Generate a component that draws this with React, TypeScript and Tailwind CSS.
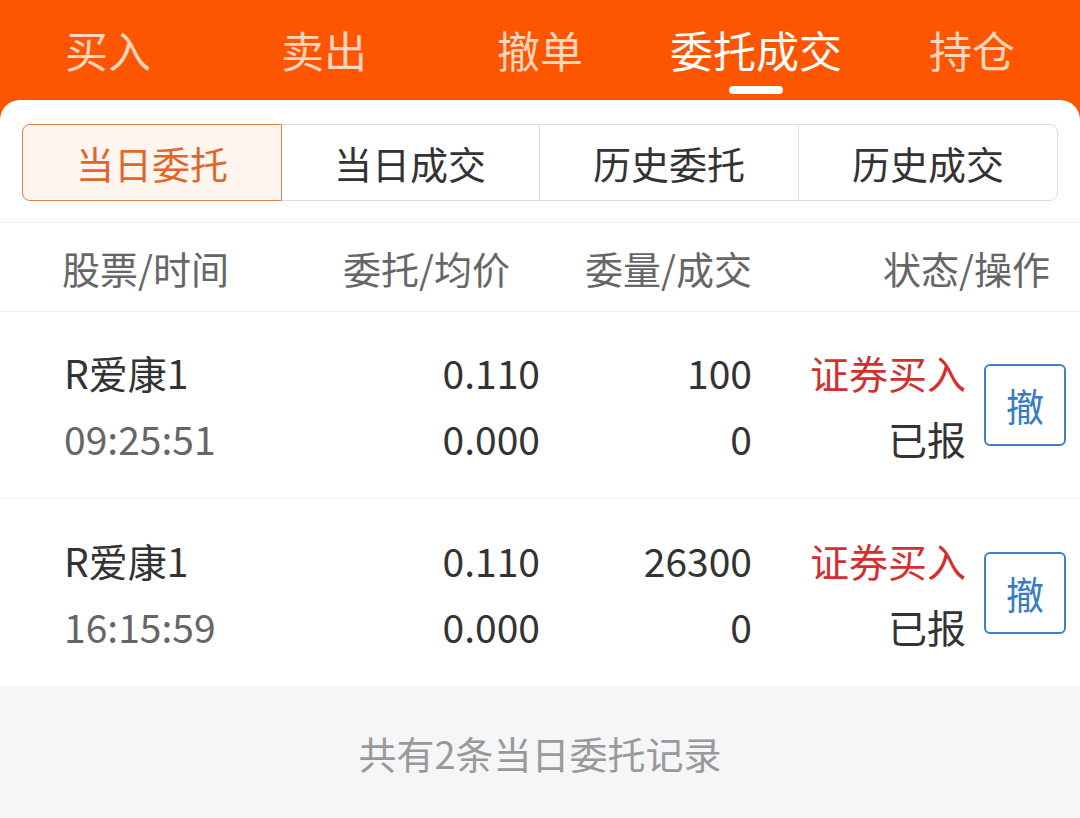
const topTabs = ['买入', '卖出', '撤单', '委托成交', '持仓'];
const segTabs = ['当日委托', '当日成交', '历史委托', '历史成交'];

const orders = [
  { name: 'R爱康1', time: '09:25:51', price: '0.110', avg: '0.000', qty: '100', done: '0', side: '证券买入', status: '已报' },
  { name: 'R爱康1', time: '16:15:59', price: '0.110', avg: '0.000', qty: '26300', done: '0', side: '证券买入', status: '已报' },
];

const font = { fontFamily: '"Noto Sans CJK SC", "Noto Sans", sans-serif' };

export default function App() {
  const active = 3;
  const seg = 0;

  return (
    <div className="w-[1080px] h-[818px] bg-[#fe5500] overflow-hidden flex flex-col" style={font}>
      {/* top tabs */}
      <div className="h-[100px] flex">
        {topTabs.map((t, i) => (
          <div key={t} className="flex-1 flex flex-col items-center pt-[21px]">
            <span className={`text-[43px] leading-[56px] ${i === active ? 'text-white' : 'text-[#ffd6bd]'}`}>{t}</span>
            {i === active && <div className="mt-[9px] w-[54px] h-[8px] rounded-full bg-white" />}
          </div>
        ))}
      </div>

      {/* card */}
      <div className="flex-1 bg-white rounded-t-[20px] flex flex-col">
        <div className="mx-[22px] mt-[24px] h-[77px] flex border border-[#dcdcdc] rounded-[8px]">
          {segTabs.map((t, i) => (
            <div
              key={t}
              className={`flex-1 flex items-center justify-center text-[38px] ${
                i === seg
                  ? 'relative z-10 bg-[#fff5ef] text-[#e0672a] border border-[#e2814a] rounded-l-[8px] -m-px'
                  : 'text-[#333] border-l border-[#dcdcdc]'
              } ${i === 1 ? 'border-l-0' : ''}`}
            >
              {t}
            </div>
          ))}
        </div>

        {/* header */}
        <div className="mt-[21px] h-[90px] flex items-center border-t border-b border-[#eeeeee] text-[38px] text-[#666] pl-[62px]">
          <div className="w-[240px]">股票/时间</div>
          <div className="w-[208px] text-right">委托/均价</div>
          <div className="w-[242px] text-right">委量/成交</div>
          <div className="flex-1 text-right pr-[30px]">状态/操作</div>
        </div>

        {orders.map((o, i) => (
          <div
            key={i}
            className={`h-[187px] flex items-center pl-[64px] text-[39px] leading-[66px] ${i === 0 ? 'border-b border-[#eeeeee]' : ''}`}
          >
            <div className="w-[240px]">
              <div className="text-[#333]">{o.name}</div>
              <div className="text-[#666]">{o.time}</div>
            </div>
            <div className="w-[236px] text-right text-[#333]">
              <div>{o.price}</div>
              <div>{o.avg}</div>
            </div>
            <div className="w-[212px] text-right text-[#333]">
              <div>{o.qty}</div>
              <div>{o.done}</div>
            </div>
            <div className="w-[214px] text-right">
              <div className="text-[#d32f2f]">{o.side}</div>
              <div className="text-[#333]">{o.status}</div>
            </div>
            <button className="ml-[18px] w-[82px] h-[82px] border-2 border-[#3f7fc4] rounded-[6px] text-[#3a7cc4] text-[38px] flex items-center justify-center">
              撤
            </button>
          </div>
        ))}

        <div className="flex-1 bg-[#f5f6f8] flex items-center justify-center text-[38px] text-[#999]">
          共有2条当日委托记录
        </div>
      </div>
    </div>
  );
}
